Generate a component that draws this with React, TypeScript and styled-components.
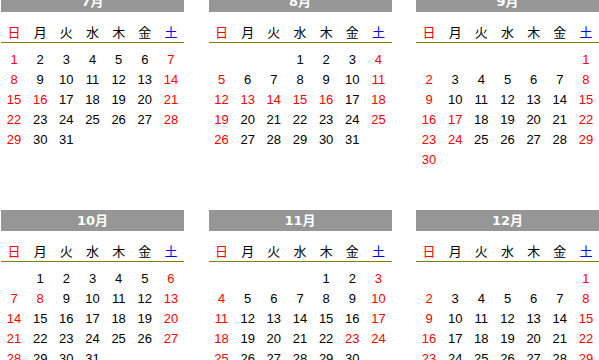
import React from 'react'
import styled, { createGlobalStyle } from 'styled-components'

const GlobalStyle = createGlobalStyle`
	html, body {
		margin: 0;
		padding: 0;
		background: #ffffff;
		overflow: hidden;
	}
`

const Page = styled.div`
	display: grid;
	grid-template-columns: repeat(3, 183px);
	column-gap: 24.5px;
	padding-left: 1px;
	margin-top: -9px;
	font-family: 'Liberation Sans', 'Noto Sans CJK JP', sans-serif;
`

const MonthCard = styled.div`
	display: flex;
	flex-direction: column;
	margin-bottom: 40px;
`

const MonthTitle = styled.div`
	height: 21px;
	line-height: 21px;
	background: #969696;
	color: #ffffff;
	font-family: 'DejaVu Sans', 'Noto Sans CJK JP', sans-serif;
	font-size: 13px;
	font-weight: bold;
	text-align: center;
`

const WeekHead = styled.div`
	display: grid;
	grid-template-columns: repeat(7, 1fr);
	margin-top: 10px;
	height: 20px;
	border-bottom: 1px solid #808000;
`

const WeekCell = styled.span<{ $tone: 'sun' | 'sat' | 'day' }>`
	text-align: center;
	line-height: 20px;
	font-family: 'Noto Sans CJK JP', sans-serif;
	font-size: 13px;
	color: ${props => (props.$tone === 'sun' ? '#ff0000' : props.$tone === 'sat' ? '#0000ff' : '#000000')};
`

const DayGrid = styled.div`
	display: grid;
	grid-template-columns: repeat(7, 1fr);
	grid-auto-rows: 20px;
	height: 120px;
	padding-top: 7px;
`

const DayCell = styled.span<{ $red: boolean }>`
	text-align: center;
	line-height: 20px;
	font-size: 13px;
	color: ${props => (props.$red ? '#ff0000' : '#000000')};
`

const YEAR = 2018
const WEEK = ['日', '月', '火', '水', '木', '金', '土']

// holidays shown in red (weekends are red anyway)
const holidays: Record<number, number[]> = {
	7: [16],
	8: [11, 13, 14, 15, 16],
	9: [17, 23, 24],
	10: [8],
	11: [3, 23],
	12: [23, 29, 30, 31],
}

function Month({ month }: { month: number }) {
	const first = new Date(YEAR, month - 1, 1).getDay()
	const days = new Date(YEAR, month, 0).getDate()
	const off = holidays[month] || []

	const cells = []
	for (let i = 0; i < first; i++) cells.push(<DayCell key={'b' + i} $red={false} />)
	for (let d = 1; d <= days; d++) {
		const wd = (first + d - 1) % 7
		const red = wd === 0 || wd === 6 || off.includes(d)
		cells.push(
			<DayCell key={d} $red={red}>
				{d}
			</DayCell>
		)
	}

	return (
		<MonthCard>
			<MonthTitle>{month}月</MonthTitle>
			<WeekHead>
				{WEEK.map((w, i) => (
					<WeekCell key={w} $tone={i === 0 ? 'sun' : i === 6 ? 'sat' : 'day'}>
						{w}
					</WeekCell>
				))}
			</WeekHead>
			<DayGrid>{cells}</DayGrid>
		</MonthCard>
	)
}

export default function App() {
	return (
		<>
			<GlobalStyle />
			<Page>
				{[7, 8, 9, 10, 11, 12].map(m => (
					<Month key={m} month={m} />
				))}
			</Page>
		</>
	)
}
